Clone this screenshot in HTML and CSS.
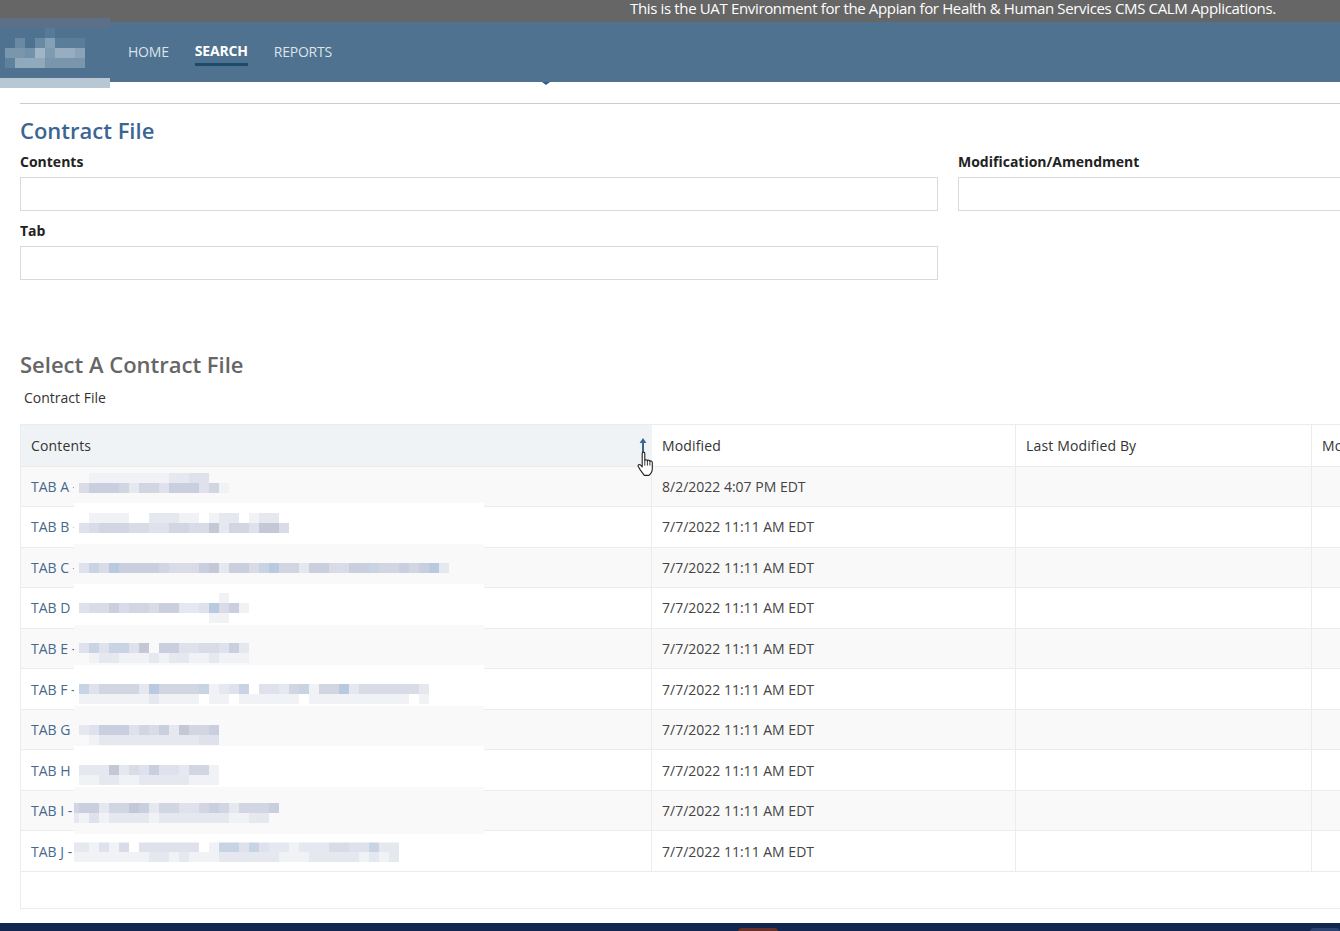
FILE: index.html
```html
<!DOCTYPE html>
<html lang="en">
<head>
    <meta charset="UTF-8">
    <meta name="viewport" content="width=device-width, initial-scale=1.0">
    <title>Contract File</title>
    <link rel="stylesheet" href="styles.css">
</head>
<body>
    <div class="env-banner">This is the UAT Environment for the Appian for Health &amp; Human Services CMS CALM Applications.</div>

    <header class="top-nav">
        <div class="logo">
            <svg width="110" height="70" viewBox="0 0 110 70">
                <rect x="0" y="0" width="110" height="10" fill="#5c7187"/>
                <rect x="45" y="10" width="10" height="10" fill="#567b98"/>
                <rect x="15" y="20" width="10" height="10" fill="#6a8aa3"/>
                <rect x="35" y="20" width="10" height="10" fill="#6a8aa3"/>
                <rect x="45" y="20" width="10" height="10" fill="#83a0b5"/>
                <rect x="55" y="20" width="30" height="10" fill="#5a7e9a"/>
                <rect x="5" y="30" width="20" height="10" fill="#7a96ad"/>
                <rect x="25" y="30" width="10" height="10" fill="#7291aa"/>
                <rect x="35" y="30" width="10" height="10" fill="#a0b6c6"/>
                <rect x="45" y="30" width="10" height="10" fill="#7e9bb1"/>
                <rect x="55" y="30" width="20" height="10" fill="#98aec0"/>
                <rect x="75" y="30" width="10" height="10" fill="#8aa3b8"/>
                <rect x="5" y="40" width="10" height="10" fill="#5f829c"/>
                <rect x="15" y="40" width="30" height="10" fill="#90a9bc"/>
                <rect x="45" y="40" width="40" height="10" fill="#7a96ac"/>
                <rect x="0" y="60" width="110" height="10" fill="#b8c7d4"/>
            </svg>
        </div>
        <nav class="nav-links">
            <a href="#" class="nav-link">HOME</a>
            <a href="#" class="nav-link active">SEARCH</a>
            <a href="#" class="nav-link">REPORTS</a>
        </nav>
        <span class="nav-caret"></span>
    </header>

    <main class="content">
        <hr class="divider">
        <h1 class="form-title">Contract File</h1>

        <div class="form-grid">
            <div class="field">
                <label>Contents</label>
                <input type="text">
            </div>
            <div class="field">
                <label>Modification/Amendment</label>
                <input type="text">
            </div>
            <div class="field">
                <label>Tab</label>
                <input type="text">
            </div>
        </div>

        <h2 class="section-title">Select A Contract File</h2>
        <p class="grid-caption">Contract File</p>

        <div class="file-grid">
            <div class="grid-row grid-head">
                <div class="cell sorted">Contents
                    <svg class="sort-arrow" width="8" height="14" viewBox="0 0 8 14"><path d="M4 0 7.4 5H5v9H3V5H.6z"/></svg>
                </div>
                <div class="cell">Modified</div>
                <div class="cell">Last Modified By</div>
                <div class="cell">Modification</div>
            </div>
            <div class="grid-row"><div class="cell"><a href="#">TAB A -</a><span class="smear"></span></div><div class="cell">8/2/2022 4:07 PM EDT</div><div class="cell"></div><div class="cell"></div></div>
            <div class="grid-row"><div class="cell"><a href="#">TAB B -</a><span class="smear"></span></div><div class="cell">7/7/2022 11:11 AM EDT</div><div class="cell"></div><div class="cell"></div></div>
            <div class="grid-row"><div class="cell"><a href="#">TAB C -</a><span class="smear"></span></div><div class="cell">7/7/2022 11:11 AM EDT</div><div class="cell"></div><div class="cell"></div></div>
            <div class="grid-row"><div class="cell"><a href="#">TAB D -</a><span class="smear"></span></div><div class="cell">7/7/2022 11:11 AM EDT</div><div class="cell"></div><div class="cell"></div></div>
            <div class="grid-row"><div class="cell"><a href="#">TAB E -</a><span class="smear"></span></div><div class="cell">7/7/2022 11:11 AM EDT</div><div class="cell"></div><div class="cell"></div></div>
            <div class="grid-row"><div class="cell"><a href="#">TAB F -</a><span class="smear"></span></div><div class="cell">7/7/2022 11:11 AM EDT</div><div class="cell"></div><div class="cell"></div></div>
            <div class="grid-row"><div class="cell"><a href="#">TAB G -</a><span class="smear"></span></div><div class="cell">7/7/2022 11:11 AM EDT</div><div class="cell"></div><div class="cell"></div></div>
            <div class="grid-row"><div class="cell"><a href="#">TAB H -</a><span class="smear"></span></div><div class="cell">7/7/2022 11:11 AM EDT</div><div class="cell"></div><div class="cell"></div></div>
            <div class="grid-row"><div class="cell"><a href="#">TAB I -</a><span class="smear"></span></div><div class="cell">7/7/2022 11:11 AM EDT</div><div class="cell"></div><div class="cell"></div></div>
            <div class="grid-row last"><div class="cell"><a href="#">TAB J -</a><span class="smear"></span></div><div class="cell">7/7/2022 11:11 AM EDT</div><div class="cell"></div><div class="cell"></div></div>

            <!-- mouse pointer from the screen capture -->
            <svg class="hand-cursor" width="18" height="26" viewBox="0 0 18 26">
                <path d="M5.2 2.4c0-1.7 2.6-1.7 2.6 0v7.2c.3-1.3 2.5-1.2 2.6.3.4-1.1 2.4-1 2.5.5.5-.9 2.3-.6 2.4.9v6.2c0 3-1.6 5.5-3.3 6.9H7.4c-1.2-1.5-2.6-3.300-4-5.300L1.300 15.500c-.8-1.500 1-2.700 2.200-1.500l1.700 1.900z" fill="#fff" stroke="#222" stroke-width="1.100" stroke-linejoin="round"/>
                <path d="M7.800 9.600v5M10.400 9.900v4.700M12.900 10.400v4.200" fill="none" stroke="#222" stroke-width=".9"/>
            </svg>
        </div>
    </main>

    <footer class="page-footer">
        <span class="footer-badge"></span>
        <span class="footer-tab"></span>
    </footer>

    <script src="app.js"></script>
</body>
</html>
```

FILE: styles.css
```css
/* Basic Reset */
* {
    margin: 0;
    padding: 0;
    box-sizing: border-box;
    font-family: "Open Sans", "Liberation Sans", sans-serif;
}

body {
    width: 1340px;
    height: 931px;
    overflow: hidden;
    background: #fff;
    color: #333;
    font-size: 14px;
}

/* Header */
.env-banner {
    height: 22px;
    padding-left: 630px;
    overflow: hidden;
    background: #666;
    color: #fff;
    font-size: 15px;
    line-height: 16px;
    letter-spacing: -0.35px;
    white-space: nowrap;
}

.top-nav {
    position: relative;
    height: 60px;
    padding-left: 128px;
    background: #4e7290;
}

.logo {
    position: absolute;
    top: -4px;
    left: 0;
    width: 110px;
    height: 70px;
}

.logo svg {
    display: block;
}

.nav-links {
    display: flex;
    gap: 26px;
    height: 100%;
}

.nav-link {
    padding-top: 20px;
    color: #dce4ea;
    font-size: 14px;
    line-height: 19px;
    letter-spacing: -0.2px;
    text-decoration: none;
}

.nav-link.active {
    height: 44px;
    padding-top: 19px;
    border-bottom: 3px solid #1d4a6b;
    color: #fff;
    font-weight: 700;
}

.nav-caret {
    position: absolute;
    bottom: -3px;
    left: 542px;
    border-top: 3px solid #2f5f8f;
    border-right: 4px solid transparent;
    border-left: 4px solid transparent;
}

/* Form */
.content {
    width: 1900px;
    height: 841px;
    padding: 21px 20px 0;
}

.divider {
    height: 1px;
    border: none;
    background: #ccc;
}

.form-title {
    margin-top: 11px;
    color: #3b6593;
    font-size: 22px;
    font-weight: 600;
    line-height: 30px;
}

.form-grid {
    display: grid;
    grid-template-columns: 918px 918px;
    column-gap: 20px;
    row-gap: 10px;
    margin-top: 7px;
}

.field label {
    display: block;
    color: #222;
    font-size: 14px;
    font-weight: 700;
    line-height: 19px;
    margin-bottom: 6px;
}

.field input {
    display: block;
    width: 100%;
    height: 34px;
    border: 1px solid #d9d9d9;
    background: #fff;
}

.section-title {
    margin-top: 69px;
    color: #666;
    font-size: 22px;
    font-weight: 600;
    line-height: 30px;
}

.grid-caption {
    margin-top: 9px;
    padding-left: 4px;
    line-height: 19px;
}

/* Results grid */
.file-grid {
    position: relative;
    height: 485px;
    margin-top: 17px;
    border: 1px solid #ececec;
}

.grid-row {
    display: grid;
    grid-template-columns: 631px 364px 296px 1fr;
    height: 40.55px;
    border-bottom: 1px solid #ececec;
}

.grid-row:nth-child(even) {
    background: #f9f9f9;
}

.grid-row:nth-child(odd) {
    background: #fff;
}

.grid-row.grid-head {
    height: 41.5px;
    background: #fff;
}

.cell {
    position: relative;
    display: flex;
    align-items: center;
    padding-left: 10px;
    border-right: 1px solid #ececec;
    white-space: nowrap;
    overflow: visible;
    color: #444;
}

.grid-head .cell {
    color: #333;
    font-weight: 400;
    letter-spacing: 0.15px;
}

.grid-head .sorted {
    background: #eff3f6;
    border-right: none;
}

.sort-arrow {
    position: absolute;
    top: 13px;
    right: 5px;
    fill: #3b6593;
}

.cell a {
    color: #47698c;
    text-decoration: none;
}

/* Redacted names */
.smear {
    position: absolute;
    top: -4px;
    bottom: -4px;
    left: 53px;
    width: 410px;
    background: #fff;
}

.grid-row:nth-child(even) .smear {
    background: #f9f9f9;
}

.grid-row:nth-child(2) .smear {
    top: 0;
}

.grid-row.last .smear {
    background: none;
}

.pixels {
    position: absolute;
    display: grid;
    grid-auto-rows: 10px;
}

.pixels.half {
    clip-path: inset(0 0 0 5px);
}

.tone-1 { background: #f1f2f6; }
.tone-2 { background: #e6e8ef; }
.tone-3 { background: #dfe2ec; }
.tone-4 { background: #d9dce6; }
.tone-5 { background: #d2d6e3; }
.tone-6 { background: #cacfdf; }
.tone-7 { background: #c3c7d6; }
.tone-a { background: #c8d3e4; }
.tone-b { background: #b9c9df; }

.hand-cursor {
    position: absolute;
    top: 26px;
    left: 616px;
}

/* Footer */
.page-footer {
    position: relative;
    height: 8px;
    overflow: hidden;
    background: #12264f;
}

.footer-badge {
    position: absolute;
    top: 5px;
    left: 738px;
    width: 40px;
    height: 8px;
    border-radius: 4px;
    background: #6b2f2a;
}

.footer-tab {
    position: absolute;
    top: 5px;
    left: 1310px;
    width: 30px;
    height: 8px;
    border-radius: 4px;
    background: #2b4170;
}
```

FILE: app.js
```js
// Blurred-out names, one string per band of 10px squares. Char is the tone class, 0 leaves it empty.
const redactions = [
    { left: 58, top: 6, bands: ['01111111122330', '466652553666351'] },
    { left: 58, top: 6, bands: ['011110022211012201220', '345554433554472553774'] },
    { left: 58, top: 15, bands: ['3a4b666654446726' + '64ab552664466a55' + '656b2'] },
    { left: 58, top: 5, bands: ['00000000000000100', '34464554662' + '23b461', '00000000000001100'] },
    { left: 58, top: 14, bands: ['3a3aa3706633443 62'.replace(' ', ''), '01221112122112111'] },
    { left: 58, top: 15, bands: ['a35555' + '2b5555a123a0' + '33' + '25a155b2' + '4444442', '11111112111101101111110111111111101'] },
    { left: 58, top: 15, bands: ['23666354627556', '01222222222233'] },
    { left: 58, top: 15, bands: ['22272436332551', '11221122222111'] },
    { left: 48, top: 12, half: true, bands: ['566255762553356525556', '21312222122222221122'] },
    { left: 48, top: 11, half: true, bands: ['221314033333301' + 'aa3a3221222443' + '3a22'.slice(0, 5), '111111112212111' + '222222111222221212'] }
];

document.querySelectorAll('.smear').forEach(function (smear, index) {
    const data = redactions[index];
    const width = Math.max(...data.bands.map(b => b.length));
    const pixels = document.createElement('div');
    pixels.className = data.half ? 'pixels half' : 'pixels';
    pixels.style.left = (data.left - 53) + 'px';
    pixels.style.top = (data.top + (index === 0 ? 0 : 4)) + 'px';
    pixels.style.gridTemplateColumns = `repeat(${width}, 10px)`;

    data.bands.forEach(function (band) {
        for (let i = 0; i < width; i++) {
            const cell = document.createElement('span');
            const tone = band[i] || '0';
            if (tone !== '0') cell.className = `tone-${tone}`;
            pixels.appendChild(cell);
        }
    });
    smear.appendChild(pixels);
});
```
